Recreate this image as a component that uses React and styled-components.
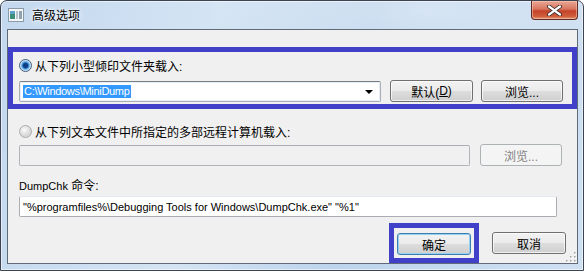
import React from "react";
import styled, { createGlobalStyle, css } from "styled-components";

const GlobalStyle = createGlobalStyle`
  html, body {
    margin: 0;
    padding: 0;
    background: #ffffff;
  }
  body {
    font-family: "Liberation Sans", "Noto Sans CJK SC", sans-serif;
    font-size: 12px;
    color: #000;
  }
`;

const Window = styled.div`
  box-sizing: border-box;
  width: 584px;
  height: 271px;
  border: 1px solid #3b4450;
  border-radius: 7px 7px 0 0;
  padding: 0 5px 6px 6px;
  display: flex;
  flex-direction: column;
  background:
    radial-gradient(ellipse 220px 60px at 420px 10px, rgba(255, 255, 255, 0.35), transparent),
    linear-gradient(100deg, #c3d8ee 0%, #d4e4f4 35%, #bdd4ec 60%, #cfe0f2 100%);
  box-shadow: inset 0 0 0 1px rgba(255, 255, 255, 0.55);
`;

const TitleBar = styled.div`
  height: 28px;
  display: flex;
  align-items: flex-start;
  position: relative;
`;

const AppIcon = styled.svg`
  margin: 7px 0 0 1px;
  width: 16px;
  height: 14px;
`;

const Title = styled.span`
  margin: 8px 0 0 8px;
  font-size: 12px;
  line-height: 14px;
  color: #000;
  text-shadow: 0 0 6px #fff, 0 0 3px #fff;
`;

const CloseButton = styled.div`
  position: absolute;
  right: 0;
  top: 0;
  width: 47px;
  height: 19px;
  border: 1px solid #5e2a24;
  border-top: none;
  border-radius: 0 0 4px 4px;
  box-sizing: border-box;
  display: flex;
  align-items: center;
  justify-content: center;
  background: linear-gradient(
    to bottom,
    #e9a795 0%,
    #d7755f 45%,
    #c5432a 55%,
    #cf5e3c 85%,
    #e49a74 100%
  );
  box-shadow: inset 0 0 0 1px rgba(255, 210, 190, 0.5);
`;

const Client = styled.div`
  flex: 1;
  border: 1px solid #5f6b78;
  background: #f0f0f0;
  display: flex;
  flex-direction: column;
  padding-top: 17px;
  position: relative;
`;

const Highlight = styled.div`
  border: 5px solid #4040c8;
  box-sizing: border-box;
`;

const TopGroup = styled(Highlight)`
  display: flex;
  flex-direction: column;
  padding: 6px 9px 2px 6px;
  gap: 8px;
`;

const Section = styled.div`
  display: flex;
  flex-direction: column;
  padding: 0 11px;
  margin-top: ${(p) => p.$top}px;
  gap: ${(p) => p.$gap}px;
`;

const RadioRow = styled.label`
  display: flex;
  align-items: center;
  gap: 3px;
  height: 14px;
  white-space: nowrap;
`;

const RadioDot = styled.span`
  box-sizing: border-box;
  width: 13px;
  height: 13px;
  border-radius: 50%;
  border: 1px solid ${(p) => (p.$checked ? "#3f5d7f" : "#a9abad")};
  background: ${(p) =>
    p.$checked
      ? "radial-gradient(circle at 50% 50%, #0b3d80 0 2px, #2f7ccc 3px, #9fd0f4 4.5px, #e6eef6 5.5px)"
      : "radial-gradient(circle at 40% 35%, #fbfbfb 0, #e3e3e3 4px, #d8d8d8 6px)"};
  flex: none;
`;

const Row = styled.div`
  display: flex;
  align-items: center;
  gap: ${(p) => p.$gap || 8}px;
`;

const Combo = styled.div`
  box-sizing: border-box;
  width: 362px;
  height: 21px;
  background: #fff;
  border: 1px solid #abadb3;
  border-top-color: #7a7d83;
  border-radius: 2px;
  display: flex;
  align-items: center;
  padding: 0 7px 0 3px;
  justify-content: space-between;
  box-shadow: inset 0 0 0 1px #e3f0fa;
`;

const Latin = styled.span`
  font-size: 11px;
  letter-spacing: ${(p) => p.$tight || 0}px;
`;

const Selected = styled(Latin)`
  background: #3399ff;
  color: #fff;
  line-height: 13px;
  padding: 0 1px;
`;

const Arrow = styled.span`
  width: 0;
  height: 0;
  border-left: 4px solid transparent;
  border-right: 4px solid transparent;
  border-top: 4px solid #000;
  margin-top: 1px;
`;

const Field = styled.div`
  box-sizing: border-box;
  width: ${(p) => p.$width}px;
  height: 21px;
  border: 1px solid ${(p) => (p.$disabled ? "#b1b5ba" : "#abadb3")};
  border-top-color: ${(p) => (p.$disabled ? "#a9adb2" : "#e3e9ef")};
  border-radius: 2px;
  background: ${(p) => (p.$disabled ? "#f0f0f0" : "#fff")};
  display: flex;
  align-items: center;
  padding: 0 3px;
  white-space: nowrap;
  overflow: hidden;
`;

const Button = styled.div`
  box-sizing: border-box;
  width: ${(p) => p.$width || 74}px;
  height: 22px;
  border-radius: 3px;
  display: flex;
  align-items: center;
  justify-content: center;
  flex: none;
  ${(p) =>
    p.$disabled
      ? css`
          border: 1px solid #adb2b5;
          background: #f4f4f4;
          color: #838383;
        `
      : css`
          border: 1px solid ${p.$default ? "#3c7fb1" : "#707070"};
          background: linear-gradient(
            to bottom,
            #f2f2f2 0%,
            #ebebeb 50%,
            #dddddd 51%,
            #cfcfcf 100%
          );
          box-shadow: inset 0 0 0 1px
            ${p.$default ? "#98d1ef" : "rgba(255,255,255,0.7)"};
          color: #000;
        `}
`;

const Label = styled.div`
  height: 14px;
  line-height: 14px;
`;

const Footer = styled.div`
  display: flex;
  justify-content: flex-end;
  align-items: center;
  gap: 13px;
  margin-top: 6px;
  padding-right: 11px;
`;

const DefaultFrame = styled(Highlight)`
  padding: 5px 3px 3px 3px;
`;

const Grip = styled.svg`
  position: absolute;
  right: 0;
  bottom: 0;
  width: 12px;
  height: 12px;
`;

export default function App() {
  return (
    <>
      <GlobalStyle />
      <Window>
        <TitleBar>
          <AppIcon viewBox="0 0 16 14">
            <rect x="0.5" y="0.5" width="15" height="13" fill="#f4f6f8" stroke="#8a9aa8" />
            <rect x="2" y="3" width="5" height="8" fill="#3d8f7a" />
            <rect x="2" y="3" width="5" height="3" fill="#5aa0c8" />
            <rect x="8" y="3" width="2" height="8" fill="#b8c4cc" />
            <rect x="11" y="3" width="3" height="8" fill="#8fa2b0" />
          </AppIcon>
          <Title>高级选项</Title>
          <CloseButton>
            <svg width="17" height="11" viewBox="0 0 17 11">
              <path
                d="M3 1.5 L8.5 5.5 L14 1.5 M3 9.5 L8.5 5.5 L14 9.5"
                stroke="#3a2a28"
                strokeWidth="4"
                fill="none"
                strokeLinecap="round"
              />
              <path
                d="M3 1.5 L8.5 5.5 L14 1.5 M3 9.5 L8.5 5.5 L14 9.5"
                stroke="#ffffff"
                strokeWidth="2.2"
                fill="none"
                strokeLinecap="round"
              />
            </svg>
          </CloseButton>
        </TitleBar>
        <Client>
          <TopGroup>
            <RadioRow>
              <RadioDot $checked />
              从下列小型倾印文件夹载入:
            </RadioRow>
            <Row $gap={9}>
              <Combo>
                <Selected $tight={-0.3}>C:\Windows\MiniDump</Selected>
                <Arrow />
              </Combo>
              <Row $gap={8}>
                <Button $width={83}>默认(<u>D</u>)</Button>
                <Button $width={82}>浏览...</Button>
              </Row>
            </Row>
          </TopGroup>
          <Section $top={15} $gap={6}>
            <RadioRow>
              <RadioDot />
              从下列文本文件中所指定的多部远程计算机载入:
            </RadioRow>
            <Row $gap={10}>
              <Field $width={451} $disabled />
              <Button $width={82} $disabled>
                浏览...
              </Button>
            </Row>
          </Section>
          <Section $top={13} $gap={3}>
            <Label>
              <Latin>DumpChk</Latin> 命令:
            </Label>
            <Field $width={538}>
              <Latin>
                "%programfiles%\Debugging Tools for Windows\DumpChk.exe" "%1"
              </Latin>
            </Field>
          </Section>
          <Footer>
            <DefaultFrame>
              <Button $default>确定</Button>
            </DefaultFrame>
            <Button>取消</Button>
          </Footer>
          <Grip viewBox="0 0 12 12">
            {[
              [10, 2], [10, 6], [10, 10], [6, 6], [6, 10], [2, 10],
            ].map(([x, y]) => (
              <g key={`${x}-${y}`}>
                <rect x={x} y={y} width="1.5" height="1.5" fill="#fff" />
                <rect x={x - 1} y={y - 1} width="1.5" height="1.5" fill="#a0a0a0" />
              </g>
            ))}
          </Grip>
        </Client>
      </Window>
    </>
  );
}
